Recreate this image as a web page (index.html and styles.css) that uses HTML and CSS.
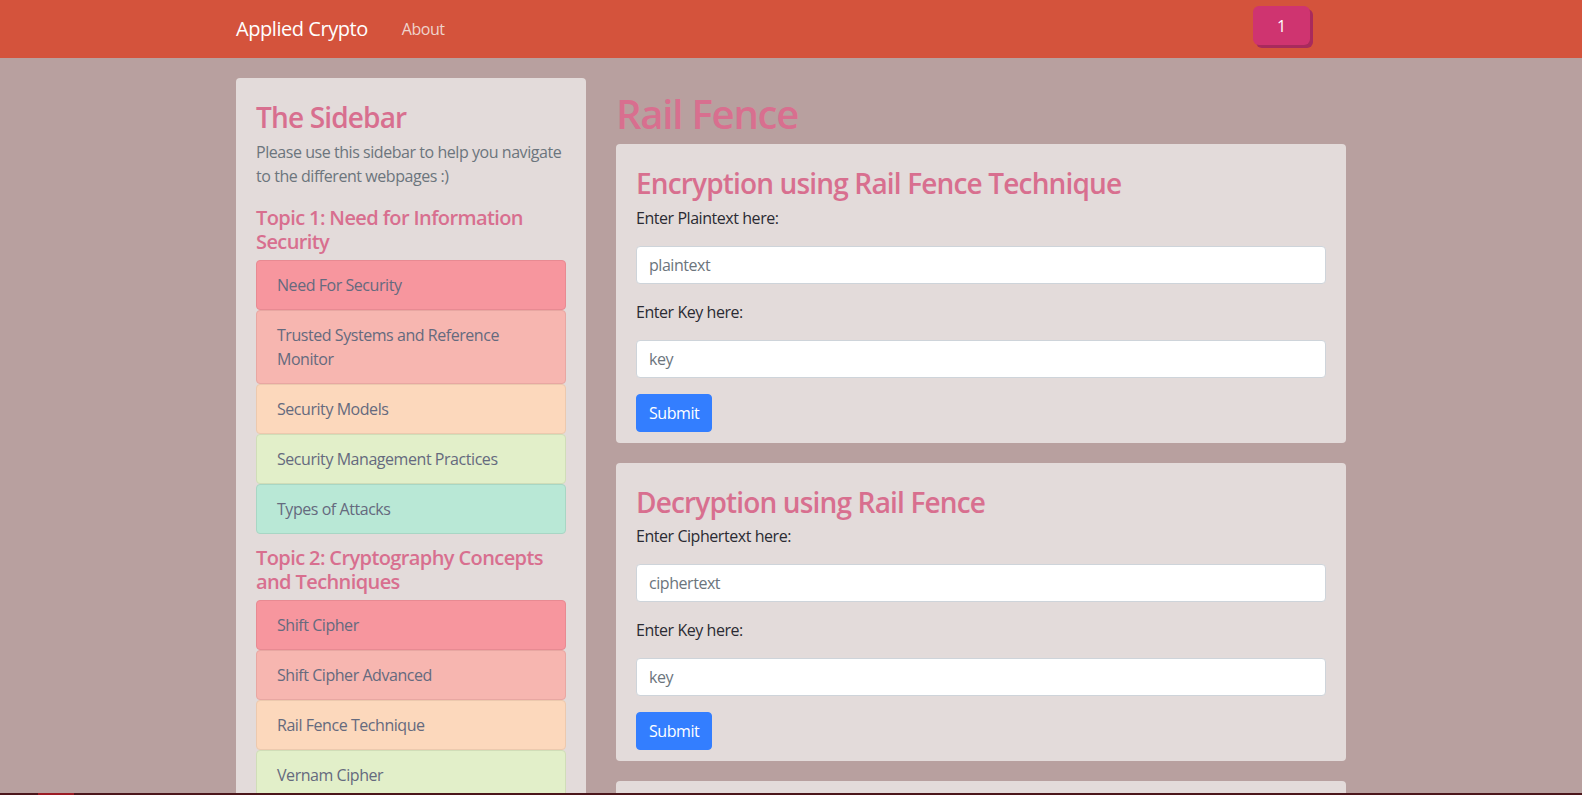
FILE: index.html
```html
<!DOCTYPE html>
<html lang="en">
<head>
<meta charset="utf-8">
<title>Rail Fence</title>
<link rel="stylesheet" href="styles.css">
</head>
<body>
<nav class="navbar">
  <div class="nav-inner">
    <a class="brand" href="#">Applied Crypto</a>
    <a class="nav-link" href="#">About</a>
    <button class="badge-btn">1</button>
  </div>
</nav>
<div class="container">
  <aside class="sidebar">
    <div class="side-card">
      <h3 class="side-title">The Sidebar</h3>
      <p class="side-text">Please use this sidebar to help you navigate to the different webpages :)</p>
      <h5 class="topic">Topic 1: Need for Information Security</h5>
      <div class="list">
        <a class="item c1" href="#">Need For Security</a>
        <a class="item c2" href="#">Trusted Systems and Reference Monitor</a>
        <a class="item c3" href="#">Security Models</a>
        <a class="item c4" href="#">Security Management Practices</a>
        <a class="item c5" href="#">Types of Attacks</a>
      </div>
      <h5 class="topic">Topic 2: Cryptography Concepts and Techniques</h5>
      <div class="list">
        <a class="item c1" href="#">Shift Cipher</a>
        <a class="item c2" href="#">Shift Cipher Advanced</a>
        <a class="item c3" href="#">Rail Fence Technique</a>
        <a class="item c4" href="#">Vernam Cipher</a>
        <a class="item c5" href="#">Vigenere Cipher</a>
      </div>
    </div>
  </aside>
  <main class="main">
    <h1 class="page-title">Rail Fence</h1>
    <section class="card">
      <h3 class="card-title">Encryption using Rail Fence Technique</h3>
      <label class="label">Enter Plaintext here:</label>
      <input class="input" type="text" placeholder="plaintext">
      <label class="label">Enter Key here:</label>
      <input class="input" type="text" placeholder="key">
      <button class="submit">Submit</button>
    </section>
    <section class="card">
      <h3 class="card-title">Decryption using Rail Fence</h3>
      <label class="label">Enter Ciphertext here:</label>
      <input class="input" type="text" placeholder="ciphertext">
      <label class="label">Enter Key here:</label>
      <input class="input" type="text" placeholder="key">
      <button class="submit">Submit</button>
    </section>
    <section class="card">
      <h3 class="card-title">Result</h3>
    </section>
  </main>
</div>
<div class="footer-line"><span class="footer-mark"></span></div>
</body>
</html>
```
FILE: styles.css
```css
* { box-sizing: border-box; }
html, body { margin: 0; padding: 0; }
body {
  background: #b8a09f;
  font-family: "Open Sans", "Noto Sans", sans-serif;
  font-size: 16px;
  line-height: 1.5;
  letter-spacing: -0.028em;
  color: #212529;
  overflow: hidden;
}
a { text-decoration: none; }

.navbar {
  background: #d4533c;
  height: 58px;
}
.nav-inner {
  width: 1110px;
  margin: 0 auto;
  height: 58px;
  display: flex;
  align-items: center;
}
.brand {
  color: #fff;
  font-size: 20px;
  line-height: 30px;
  margin-right: 34px;
}
.nav-link {
  color: #efd3cc;
  font-size: 16px;
  line-height: 24px;
}
.badge-btn {
  align-self: flex-start;
  margin-left: auto;
  margin-right: 36px;
  margin-top: 6px;
  width: 57px;
  height: 39px;
  border: none;
  border-radius: 6px;
  background: #cf3470;
  box-shadow: 3px 3px 0 #a82a5c;
  color: #fff;
  font-family: inherit;
  font-size: 16px;
}

.container {
  width: 1110px;
  margin: 20px auto 0;
  display: flex;
  gap: 30px;
  align-items: flex-start;
}
.sidebar { width: 350px; flex: none; }
.side-card {
  background: #e3dbda;
  border-radius: 4px;
  padding: 20px;
}
.side-title {
  margin: 0 0 5px;
  padding-top: 3px;
  font-size: 28px;
  line-height: 1.2;
  font-weight: 600;
  letter-spacing: -0.03em;
  color: #d86f8f;
}
.side-text {
  margin: 0 0 16px;
  color: #6c757d;
}
.topic {
  margin: 0 0 6px;
  padding-top: 2px;
  font-size: 20px;
  line-height: 1.2;
  font-weight: 600;
  letter-spacing: -0.03em;
  color: #d86f8f;
}
.list {
  display: flex;
  flex-direction: column;
  margin-bottom: 10px;
}
.item {
  display: block;
  padding: 12px 20px;
  border: 1px solid;
  border-radius: 4px;
  color: #656a7e;
}
.c1 { background: #f7969e; border-color: #e88a92; }
.c2 { background: #f7b6b0; border-color: #e8a7a2; }
.c3 { background: #fcd8bc; border-color: #ecc9ae; }
.c4 { background: #e2efc9; border-color: #d0ddb8; }
.c5 { background: #b9e8d6; border-color: #a8d6c4; }

.main { flex: 1; min-width: 0; }
.page-title {
  margin: 10px 0 6px;
  padding-top: 2px;
  font-size: 40px;
  line-height: 1.2;
  font-weight: 600;
  letter-spacing: -0.03em;
  color: #d86f8f;
}
.card {
  background: #e3dbda;
  border-radius: 4px;
  padding: 20px 20px 11px;
  margin-bottom: 20px;
  display: flex;
  flex-direction: column;
  align-items: flex-start;
}
.card-title {
  margin: 0 0 5px;
  padding-top: 3px;
  font-size: 28px;
  line-height: 1.2;
  font-weight: 600;
  letter-spacing: -0.03em;
  color: #d86f8f;
}
.label {
  margin-bottom: 16px;
  color: #2b2b33;
}
.input {
  width: 100%;
  height: 38px;
  padding: 6px 12px;
  border: 1px solid #ced4da;
  border-radius: 4px;
  background: #fff;
  font-family: inherit;
  font-size: 16px;
  letter-spacing: -0.028em;
  margin-bottom: 16px;
  color: #495057;
}
.input::placeholder { color: #6c757d; }
.submit {
  height: 38px;
  padding: 6px 12px;
  border: 1px solid #337eff;
  border-radius: 4px;
  background: #337eff;
  color: #fff;
  font-family: inherit;
  font-size: 16px;
  letter-spacing: -0.028em;
}

.footer-line {
  position: fixed;
  left: 0;
  right: 0;
  bottom: 0;
  height: 2px;
  background: #4b161b;
}
.footer-mark {
  display: block;
  margin-left: 38px;
  width: 36px;
  height: 2px;
  background: #9b1b24;
}
```
